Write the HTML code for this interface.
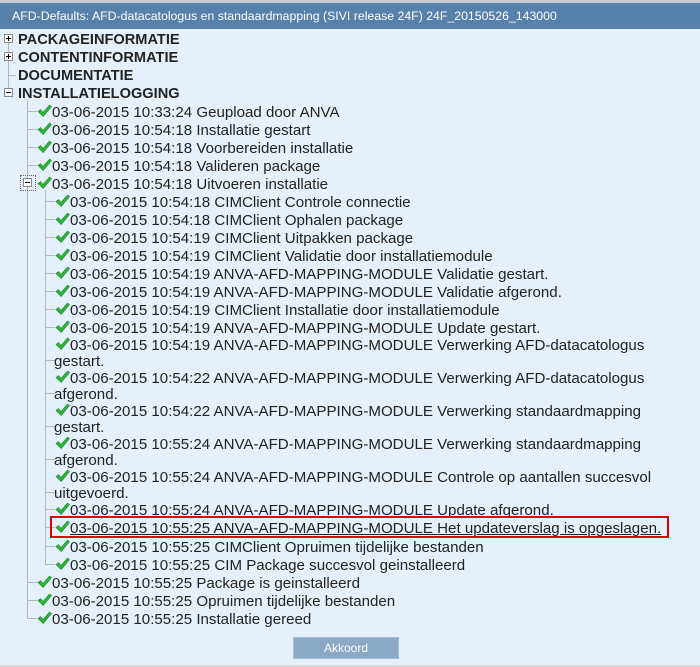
<!DOCTYPE html>
<html><head><meta charset="utf-8"><style>
*{margin:0;padding:0;box-sizing:border-box}
body{width:700px;height:667px;background:#e4f1fc;position:relative;overflow:hidden;font-family:"Liberation Sans",sans-serif;color:#222}
.top{position:absolute;left:0;top:0;width:700px;height:3px;background:#c8ccd0}
.bar{position:absolute;left:0;top:3px;width:700px;height:26px;background:#5581aa;color:#fff;font-size:12.3px;line-height:26px;padding-left:12px;white-space:nowrap}
.t{position:absolute;white-space:nowrap;font-size:15.1px;line-height:17px}
.b{position:absolute;white-space:nowrap;font-size:14.6px;font-weight:bold;line-height:18px;left:18px;color:#222}
.v{position:absolute;width:1px;background:#b4b8bc}
.h{position:absolute;height:1px;background:#b4b8bc}
.ck{position:absolute;width:15px;height:14px}
.box{position:absolute;width:9px;height:9px;border:1px solid #888;background:#fff;left:4px}
.box:before{content:"";position:absolute;left:1px;top:3px;width:5px;height:1px;background:#000}
.box.p:after{content:"";position:absolute;left:3px;top:1px;width:1px;height:5px;background:#000}
</style></head><body>
<div class="top"></div>
<div class="bar">AFD-Defaults: AFD-datacatologus en standaardmapping (SIVI release 24F) 24F_20150526_143000</div>

<div class="v" style="left:8px;top:34px;height:55px"></div>
<div class="h" style="left:8px;top:75px;width:8px"></div>
<div class="box p" style="top:34px"></div>
<div class="box p" style="top:52px"></div>
<div class="box" style="top:88px"></div>
<div class="b" style="top:31px">PACKAGEINFORMATIE</div>
<div class="b" style="top:49px">CONTENTINFORMATIE</div>
<div class="b" style="top:67px">DOCUMENTATIE</div>
<div class="b" style="top:85px">INSTALLATIELOGGING</div>

<div class="v" style="left:27px;top:100px;height:519px"></div>
<div class="v" style="left:45px;top:190px;height:375px"></div>
<div style="position:absolute;left:20px;top:175px;width:16px;height:16px;border:1px dotted #666"></div>
<div class="box" style="left:23px;top:178px"></div>

<div id="tree"></div>
<div style="position:absolute;left:50px;top:516px;width:619px;height:22px;border:2px solid #e00000"></div>

<div style="position:absolute;left:293px;top:637px;width:106px;height:22px;background:#8ba9c5;border:1px solid #a9bed2;color:#fff;font-size:12px;line-height:20px;text-align:center">Akkoord</div>
<div style="position:absolute;left:0;top:665px;width:700px;height:2px;background:#d6d9dc"></div>

<script>
var svg='<svg class="ck" viewBox="0 0 15 14" style="position:absolute;left:0;top:0"><path d="M1 7.5 L3.5 5.5 L6 8.5 L12.5 1 L14.5 2.5 L6.2 12.5 Z" fill="#2fb53a" stroke="#1d8a28" stroke-width="0.6"/></svg>';
var L1=[[111,"03-06-2015 10:33:24 Geupload door ANVA"],[129,"03-06-2015 10:54:18 Installatie gestart"],[147,"03-06-2015 10:54:18 Voorbereiden installatie"],[165,"03-06-2015 10:54:18 Valideren package"],[183,"03-06-2015 10:54:18 Uitvoeren installatie"],[582,"03-06-2015 10:55:25 Package is geinstalleerd"],[600,"03-06-2015 10:55:25 Opruimen tijdelijke bestanden"],[618,"03-06-2015 10:55:25 Installatie gereed"]];
var L2=[[201,"03-06-2015 10:54:18 CIMClient Controle connectie"],[219,"03-06-2015 10:54:18 CIMClient Ophalen package"],[237,"03-06-2015 10:54:19 CIMClient Uitpakken package"],[255,"03-06-2015 10:54:19 CIMClient Validatie door installatiemodule"],[273,"03-06-2015 10:54:19 ANVA-AFD-MAPPING-MODULE Validatie gestart."],[291,"03-06-2015 10:54:19 ANVA-AFD-MAPPING-MODULE Validatie afgerond."],[309,"03-06-2015 10:54:19 CIMClient Installatie door installatiemodule"],[327,"03-06-2015 10:54:19 ANVA-AFD-MAPPING-MODULE Update gestart."],[344,"03-06-2015 10:54:19 ANVA-AFD-MAPPING-MODULE Verwerking AFD-datacatologus","gestart."],[377,"03-06-2015 10:54:22 ANVA-AFD-MAPPING-MODULE Verwerking AFD-datacatologus","afgerond."],[410,"03-06-2015 10:54:22 ANVA-AFD-MAPPING-MODULE Verwerking standaardmapping","gestart."],[443,"03-06-2015 10:55:24 ANVA-AFD-MAPPING-MODULE Verwerking standaardmapping","afgerond."],[476,"03-06-2015 10:55:24 ANVA-AFD-MAPPING-MODULE Controle op aantallen succesvol","uitgevoerd."],[509,"03-06-2015 10:55:24 ANVA-AFD-MAPPING-MODULE Update afgerond."],[527,"03-06-2015 10:55:25 ANVA-AFD-MAPPING-MODULE Het updateverslag is opgeslagen.",null,1],[546,"03-06-2015 10:55:25 CIMClient Opruimen tijdelijke bestanden"],[564,"03-06-2015 10:55:25 CIM Package succesvol geinstalleerd"]];
var h='';
L1.forEach(function(r){var y=r[0];
 if(y!=183)h+='<div class="h" style="left:27px;top:'+y+'px;width:10px"></div>';
 h+='<div style="position:absolute;left:37px;top:'+(y-7)+'px;width:15px;height:14px">'+svg+'</div>';
 h+='<div class="t" style="left:52px;top:'+(y-7)+'px">'+r[1]+'</div>';});
L2.forEach(function(r){var y=r[0];var cy=r[2]?y+16:y;
 h+='<div class="h" style="left:45px;top:'+cy+'px;width:10px"></div>';
 h+='<div style="position:absolute;left:55px;top:'+(y-7)+'px;width:15px;height:14px">'+svg+'</div>';
 h+='<div class="t" style="left:70px;top:'+(y-7)+'px;'+(r[3]?'text-decoration:underline':'')+'">'+r[1]+'</div>';
 if(r[2])h+='<div class="t" style="left:54px;top:'+(y+9)+'px">'+r[2]+'</div>';});
document.getElementById('tree').innerHTML=h;
</script>
</body></html>
